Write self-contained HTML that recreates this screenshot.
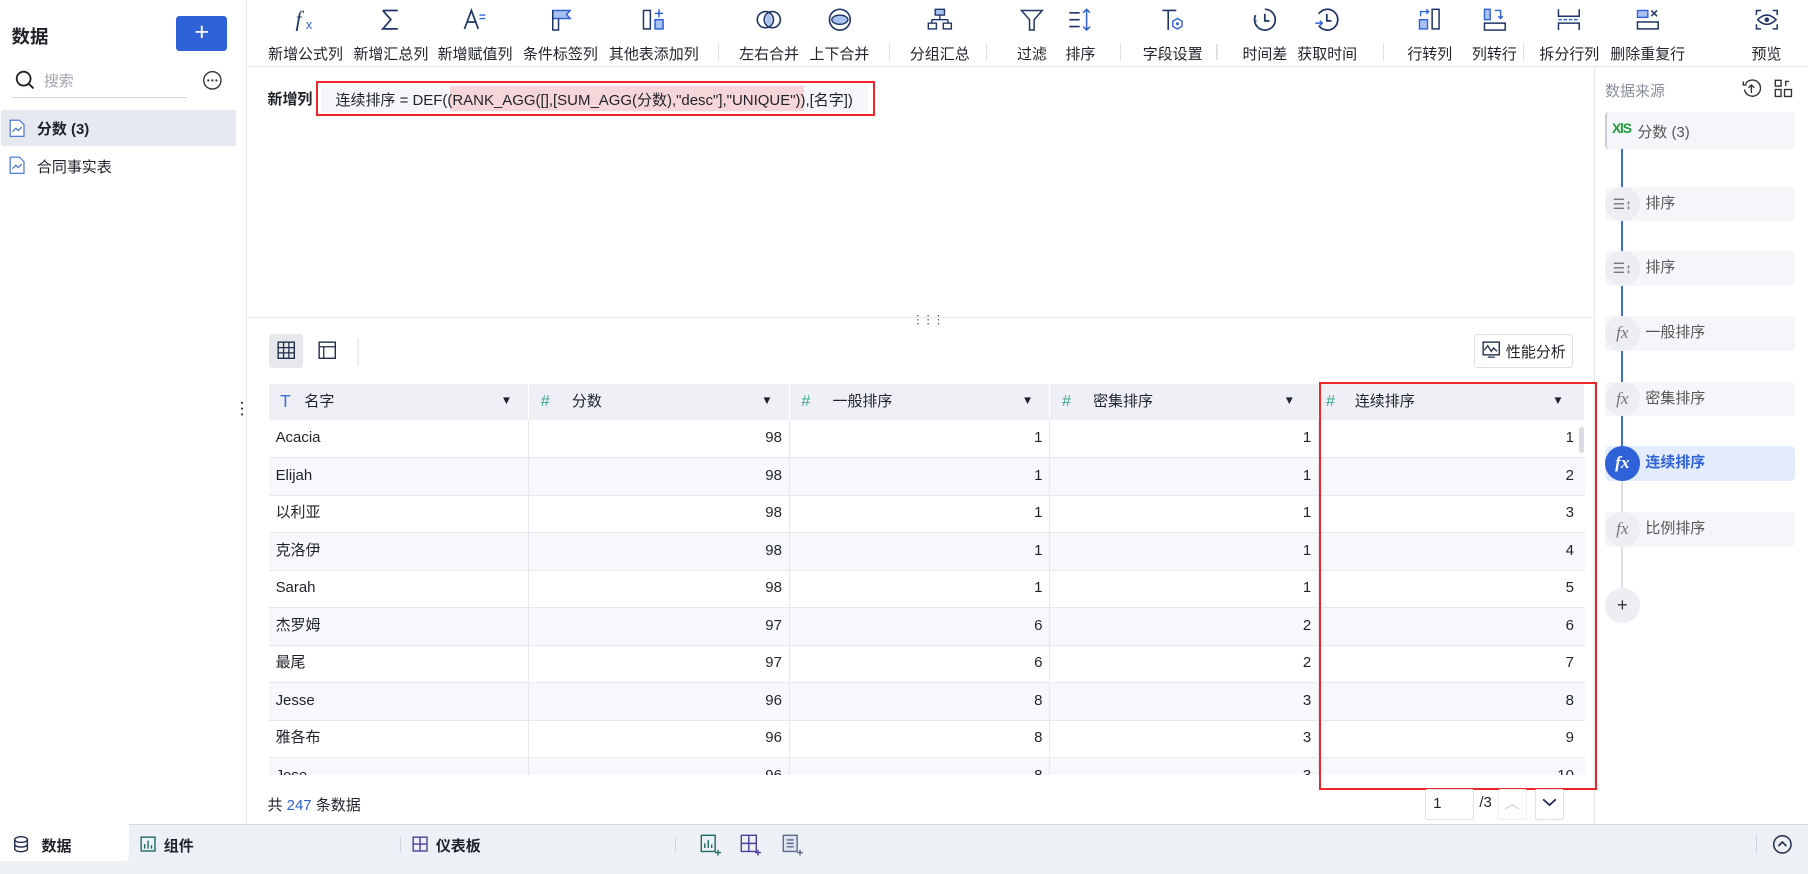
<!DOCTYPE html>
<html><head><meta charset="utf-8">
<style>
*{box-sizing:border-box;margin:0;padding:0}
html,body{width:1808px;height:874px;overflow:hidden;background:#fff}
#w{position:absolute;left:0;top:0;width:1568px;height:758px;zoom:1.15306;font-family:"Liberation Sans","Noto Sans CJK SC",sans-serif;color:#1f2329;font-size:13px;background:#fff;overflow:hidden}
.a{position:absolute}
.tb{position:absolute;top:0;width:90px;margin-left:-45px;text-align:center}
.tb svg{position:absolute;left:33px;top:6px}
.tb span{position:absolute;top:37px;left:0;width:90px;font-size:13px;white-space:nowrap;text-align:center;color:#1f2329}
.sep{position:absolute;top:38px;width:1px;height:14px;background:#dcdfe6}
.th{position:absolute;top:333px;height:31px;background:#eef0f5;border-right:1px solid #fff;font-size:13px;line-height:31px}
.row{position:absolute;left:233px;width:1142px;height:33px;border-bottom:1px solid #e6e8ee;font-size:13px;line-height:32px}
.row div{position:absolute;top:0;height:32px;border-right:1px solid #e6e8ee;padding:0 6px}
.row .r{text-align:right}
.node{position:absolute;left:1392px;width:165px;height:30px;background:#f5f6f9;border-radius:4px;font-size:13px;line-height:30px;color:#555}
.node .c{position:absolute;left:0;top:0;width:30px;height:30px;border-radius:15px;background:#eceef3;text-align:center;font-style:italic;font-family:"Liberation Serif",serif;font-size:15px;color:#777}
.node span{position:absolute;left:35px}
</style></head><body><div id="w">

<!-- left sidebar -->
<div class="a" style="left:0;top:0;width:214px;height:715px;border-right:1px solid #e6e8ee"></div>
<div class="a" style="left:10px;top:20px;font-size:16px;font-weight:bold">数据</div>
<div class="a" style="left:153px;top:14px;width:44px;height:30px;background:#2f62d8;border-radius:3px;color:#fff;font-size:22px;line-height:28px;text-align:center">+</div>
<svg class="a" style="left:13px;top:61px" width="18" height="18" viewBox="0 0 18 18"><circle cx="7.5" cy="7.5" r="6" fill="none" stroke="#1f2329" stroke-width="1.6"/><path d="M12 12l4 4" stroke="#1f2329" stroke-width="1.6"/></svg>
<div class="a" style="left:38px;top:61px;color:#a0a4ad">搜索</div>
<div class="a" style="left:10px;top:84px;width:152px;height:1px;background:#d4d7de"></div>
<svg class="a" style="left:175px;top:61px" width="18" height="18"><circle cx="9" cy="9" r="7.5" fill="none" stroke="#333" stroke-width="1.2"/><circle cx="5.5" cy="9" r="1" fill="#333"/><circle cx="9" cy="9" r="1" fill="#333"/><circle cx="12.5" cy="9" r="1" fill="#333"/></svg>
<div class="a" style="left:1px;top:95px;width:204px;height:32px;background:#e6e9f0"></div>
<svg class="a" style="left:8px;top:103px" width="14" height="16"><path d="M1 1h8l4 4v10H1z" fill="#fff" stroke="#3e6fd8"/><path d="M3 11l3-3 2 2 3-3" fill="none" stroke="#3e6fd8"/></svg>
<div class="a" style="left:32px;top:102px;font-weight:bold">分数 (3)</div>
<svg class="a" style="left:8px;top:135px" width="14" height="16"><path d="M1 1h8l4 4v10H1z" fill="#fff" stroke="#3e6fd8"/><path d="M3 11l3-3 2 2 3-3" fill="none" stroke="#3e6fd8"/></svg>
<div class="a" style="left:32px;top:135px">合同事实表</div>
<div class="a" style="left:209px;top:347px;width:2px;height:16px;background:radial-gradient(circle,#334 0.9px,transparent 1.1px) 0 0/2px 5px"></div>

<!-- toolbar -->
<div class="a" style="left:214px;top:57px;width:1354px;height:1px;background:#e8e9ee"></div>
<div class="tb" style="left:265px"><svg width="24" height="22"><text x="3" y="17" font-family="Liberation Serif" font-style="italic" font-size="19" fill="#1f3566">f</text><text x="12" y="19" font-size="11" fill="#2f62d8">x</text></svg><span>新增公式列</span></div>
<div class="tb" style="left:339px"><svg width="24" height="22"><path d="M5 3h13M5 3l7 8-7 8h13" fill="none" stroke="#1f3566" stroke-width="1.5"/></svg><span>新增汇总列</span></div>
<div class="tb" style="left:412px"><svg width="24" height="22"><path d="M3 19l6-16 6 16M5.5 13h7" fill="none" stroke="#1f3566" stroke-width="1.5"/><path d="M16 7h5M16 10h5" stroke="#2f62d8" stroke-width="1.2"/></svg><span>新增赋值列</span></div>
<div class="tb" style="left:486px"><svg width="24" height="22"><path d="M5 3h15l-3 3.5 3 3.5H5z" fill="#a9c1ef" stroke="#2f62d8" stroke-width="1.3"/><path d="M5 3v17h5v-10" fill="none" stroke="#1f3566" stroke-width="1.3"/></svg><span>条件标签列</span></div>
<div class="tb" style="left:567px"><svg width="24" height="22"><rect x="3" y="3" width="6" height="16" fill="none" stroke="#1f3566" stroke-width="1.3"/><rect x="13" y="11" width="7" height="8" fill="#a9c1ef" stroke="#2f62d8" stroke-width="1.3"/><path d="M16.5 2v7M13 5.5h7" stroke="#2f62d8" stroke-width="1.3"/></svg><span>其他表添加列</span></div>
<div class="sep" style="left:623px"></div>
<div class="tb" style="left:667px"><svg width="24" height="22"><circle cx="9" cy="11" r="7" fill="none" stroke="#1f3566" stroke-width="1.4"/><circle cx="15" cy="11" r="7" fill="none" stroke="#1f3566" stroke-width="1.4"/><path d="M12 5.5a7 7 0 0 1 0 11a7 7 0 0 1 0-11z" fill="#a9c1ef"/></svg><span>左右合并</span></div>
<div class="tb" style="left:728px"><svg width="24" height="22"><circle cx="12" cy="11" r="9" fill="none" stroke="#1f3566" stroke-width="1.4"/><ellipse cx="12" cy="11" rx="7" ry="4" fill="#a9c1ef" stroke="#1f3566" stroke-width="1.2"/></svg><span>上下合并</span></div>
<div class="sep" style="left:771px"></div>
<div class="tb" style="left:815px"><svg width="24" height="22"><rect x="8" y="2" width="8" height="5" fill="#a9c1ef" stroke="#1f3566" stroke-width="1.2"/><path d="M12 7v4M5 11h14M5 11v3M19 11v3" fill="none" stroke="#1f3566" stroke-width="1.2"/><rect x="2" y="14" width="7" height="5" fill="none" stroke="#1f3566" stroke-width="1.2"/><rect x="15" y="14" width="7" height="5" fill="none" stroke="#1f3566" stroke-width="1.2"/></svg><span>分组汇总</span></div>
<div class="sep" style="left:855px"></div>
<div class="tb" style="left:895px"><svg width="24" height="22"><path d="M3 3h18l-7 8v9h-4v-9z" fill="none" stroke="#1f3566" stroke-width="1.3"/></svg><span>过滤</span></div>
<div class="tb" style="left:937px"><svg width="24" height="22"><path d="M2 5h9M2 11h9M2 17h9" stroke="#1f3566" stroke-width="1.4"/><path d="M17 2v18M14 5l3-3 3 3M14 17l3 3 3-3" fill="none" stroke="#2f62d8" stroke-width="1.3"/></svg><span>排序</span></div>
<div class="sep" style="left:971px"></div>
<div class="tb" style="left:1017px"><svg width="24" height="22"><path d="M3 3h12M8 3v17" stroke="#1f3566" stroke-width="1.4"/><path d="M16 10l4 2.3v4.5l-4 2.3-4-2.3v-4.5z" fill="none" stroke="#2f62d8" stroke-width="1.2"/><circle cx="16" cy="14.5" r="1.3" fill="#2f62d8"/></svg><span>字段设置</span></div>
<div class="sep" style="left:1055px"></div>
<div class="tb" style="left:1097px"><svg width="24" height="22"><path d="M12 2a9 9 0 1 1-8 5" fill="none" stroke="#1f3566" stroke-width="1.5"/><path d="M12 6v6h4" fill="none" stroke="#1f3566" stroke-width="1.5"/><path d="M4 11v2M6 17v1" stroke="#2f62d8" stroke-width="1.5"/></svg><span>时间差</span></div>
<div class="tb" style="left:1151px"><svg width="24" height="22"><path d="M5 6a9 9 0 1 1 0 10" fill="none" stroke="#1f3566" stroke-width="1.5"/><path d="M12 6v6h4" fill="none" stroke="#1f3566" stroke-width="1.5"/><path d="M2 14h6M6 12l2 2-2 2" fill="none" stroke="#2f62d8" stroke-width="1.3"/></svg><span>获取时间</span></div>
<div class="sep" style="left:1199px"></div>
<div class="tb" style="left:1240px"><svg width="24" height="22"><rect x="3" y="11" width="7" height="8" fill="#a9c1ef" stroke="#2f62d8" stroke-width="1.2"/><rect x="14" y="2" width="6" height="17" fill="none" stroke="#1f3566" stroke-width="1.3"/><path d="M4 8V4h7M9 2l2 2-2 2" fill="none" stroke="#2f62d8" stroke-width="1.2"/></svg><span>行转列</span></div>
<div class="tb" style="left:1296px"><svg width="24" height="22"><rect x="3" y="2" width="5" height="9" fill="#a9c1ef" stroke="#2f62d8" stroke-width="1.2"/><rect x="3" y="14" width="18" height="6" fill="none" stroke="#1f3566" stroke-width="1.3"/><path d="M12 3h5v7M15 8l2 2 2-2" fill="none" stroke="#2f62d8" stroke-width="1.2"/></svg><span>列转行</span></div>
<div class="sep" style="left:1321px"></div>
<div class="tb" style="left:1361px"><svg width="24" height="22"><path d="M3 2v6h18V2M3 20v-6h18v6" fill="none" stroke="#1f3566" stroke-width="1.3"/><path d="M3 11h18" stroke="#2f62d8" stroke-width="1.3" stroke-dasharray="3 1.5"/></svg><span>拆分行列</span></div>
<div class="tb" style="left:1429px"><svg width="24" height="22"><rect x="3" y="3" width="9" height="6" fill="#a9c1ef" stroke="#2f62d8" stroke-width="1.2"/><path d="M15 3l5 5M20 3l-5 5" stroke="#1f3566" stroke-width="1.3"/><rect x="3" y="13" width="18" height="6" fill="none" stroke="#1f3566" stroke-width="1.3"/></svg><span>删除重复行</span></div>
<div class="tb" style="left:1532px"><svg width="24" height="22"><path d="M3 7V3h4M17 3h4v4M21 15v4h-4M7 19H3v-4" fill="none" stroke="#1f3566" stroke-width="1.3"/><path d="M4 11q8-8 16 0q-8 8-16 0z" fill="none" stroke="#1f3566" stroke-width="1.3"/><circle cx="12" cy="11" r="2" fill="#1f3566"/></svg><span>预览</span></div>

<!-- formula -->
<div class="a" style="left:232px;top:76px;font-weight:bold">新增列</div>
<div class="a" style="left:274px;top:70px;width:485px;height:31px;border:2px solid #f0262d;background:#fff"></div>
<div class="a" style="left:278px;top:74px;width:475px;height:23px;background:#f5f6fa"></div>
<div class="a" style="left:390px;top:75px;width:307px;height:21px;background:#f6d6d9"></div>
<div class="a" style="left:291px;top:77px;font-size:13px;white-space:nowrap">连续排序 = DEF((RANK_AGG([],[SUM_AGG(分数),"desc"],"UNIQUE")),[名字])</div>

<!-- divider -->
<div class="a" style="left:214px;top:275px;width:1168px;height:1px;background:#e6e8ee"></div>
<div class="a" style="left:791px;top:271px;font-size:10px;color:#555;letter-spacing:-1px">⋮⋮⋮</div>

<!-- right panel -->
<div class="a" style="left:1382px;top:58px;width:1px;height:657px;background:#e6e8ee"></div>
<div class="a" style="left:1392px;top:69px;color:#8a8f99">数据来源</div>
<svg class="a" style="left:1510px;top:68px" width="18" height="18"><path d="M4 5a7 7 0 1 1-1 5" fill="none" stroke="#333" stroke-width="1.2"/><path d="M2 3v3h3" fill="none" stroke="#333" stroke-width="1.2"/><path d="M9 13V6M6.5 8.5L9 6l2.5 2.5" fill="none" stroke="#333" stroke-width="1.2"/></svg>
<svg class="a" style="left:1538px;top:68px" width="18" height="18"><rect x="2" y="2" width="5" height="5" fill="none" stroke="#333" stroke-width="1.2"/><rect x="2" y="10" width="5" height="6" fill="none" stroke="#333" stroke-width="1.2"/><rect x="10" y="10" width="6" height="6" fill="none" stroke="#333" stroke-width="1.2"/><path d="M11 7V3h3" fill="none" stroke="#333" stroke-width="1.2"/></svg>
<div class="a" style="left:1406px;top:128px;width:1.5px;height:262px;background:#3e6fd8"></div>
<div class="a" style="left:1406px;top:390px;width:1.5px;height:130px;background:#dcdfe6"></div>
<div class="a" style="left:1392px;top:97px;width:165px;height:32px;background:#f5f6f9;border-left:2px solid #c8ccd4;border-radius:3px"></div>
<div class="a" style="left:1398px;top:104px;font-weight:bold;color:#1f9d3a;font-size:12px;letter-spacing:-1px">XlS</div>
<div class="a" style="left:1420px;top:105px;color:#555">分数 (3)</div>
<div class="node" style="top:162px"><div class="c" style="font-style:normal;font-family:'Liberation Sans';font-size:12px">☰↕</div><span>排序</span></div>
<div class="node" style="top:218px"><div class="c" style="font-style:normal;font-family:'Liberation Sans';font-size:12px">☰↕</div><span>排序</span></div>
<div class="node" style="top:274px"><div class="c">fx</div><span>一般排序</span></div>
<div class="node" style="top:331px"><div class="c">fx</div><span>密集排序</span></div>
<div class="node" style="top:387px;background:#e3ecfd;color:#2f62d8;font-weight:bold"><div class="c" style="background:#2f62d8;color:#fff">fx</div><span>连续排序</span></div>
<div class="node" style="top:444px"><div class="c">fx</div><span>比例排序</span></div>
<div class="a" style="left:1392px;top:510px;width:30px;height:30px;border-radius:15px;background:#eceef3;text-align:center;line-height:29px;font-size:16px;color:#333">+</div>

<!-- view toggles -->
<div class="a" style="left:233px;top:290px;width:30px;height:29px;background:#e6e8ec;border-radius:3px"></div>
<svg class="a" style="left:240px;top:296px" width="16" height="16"><rect x="1" y="1" width="14" height="14" fill="none" stroke="#1f2d4d" stroke-width="1.2"/><path d="M5.7 1v14M10.3 1v14M1 5.7h14M1 10.3h14" stroke="#1f2d4d" stroke-width="1.1"/></svg>
<svg class="a" style="left:276px;top:296px" width="16" height="16"><rect x="1" y="1" width="14" height="14" fill="none" stroke="#1f2d4d" stroke-width="1.2"/><path d="M1 5h14M5 5v10" stroke="#1f2d4d" stroke-width="1.1"/></svg>
<div class="a" style="left:310px;top:293px;width:1px;height:24px;background:#eceef2"></div>
<div class="a" style="left:1278px;top:290px;width:86px;height:29px;border:1px solid #dcdfe6;border-radius:3px"></div>
<svg class="a" style="left:1285px;top:296px" width="16" height="15"><rect x="1" y="1" width="14" height="11" fill="none" stroke="#1f2d4d" stroke-width="1.2"/><path d="M2 8l3-4 3 5 2-3 3 3M5 14h6" fill="none" stroke="#1f2d4d" stroke-width="1.1"/></svg>
<div class="a" style="left:1306px;top:296px">性能分析</div>

<!-- table -->
<div class="th" style="left:233px;width:226px"><span style="position:absolute;left:10px;color:#3e6fd8;font-size:15px">T</span><span style="position:absolute;left:31px">名字</span><span style="position:absolute;right:14px;font-size:10px">▼</span></div>
<div class="th" style="left:459px;width:226px"><span style="position:absolute;left:10px;color:#3aa890;font-size:14px">#</span><span style="position:absolute;left:37px">分数</span><span style="position:absolute;right:14px;font-size:10px">▼</span></div>
<div class="th" style="left:685px;width:226px"><span style="position:absolute;left:10px;color:#3aa890;font-size:14px">#</span><span style="position:absolute;left:37px">一般排序</span><span style="position:absolute;right:14px;font-size:10px">▼</span></div>
<div class="th" style="left:911px;width:233px"><span style="position:absolute;left:10px;color:#3aa890;font-size:14px">#</span><span style="position:absolute;left:37px">密集排序</span><span style="position:absolute;right:20px;font-size:10px">▼</span></div>
<div class="th" style="left:1144px;width:231px"><span style="position:absolute;left:6px;color:#3aa890;font-size:14px">#</span><span style="position:absolute;left:31px">连续排序</span><span style="position:absolute;right:18px;font-size:10px">▼</span></div>
<div class="a" style="left:233px;top:364px;width:1142px;height:308px;overflow:hidden">
<div style="position:relative;top:-364px;left:-233px">
<div class="row" style="top:364px"><div style="left:0;width:226px">Acacia</div><div class="r" style="left:226px;width:226px">98</div><div class="r" style="left:452px;width:226px">1</div><div class="r" style="left:678px;width:233px">1</div><div class="r" style="left:911px;width:231px;border:0;padding-right:10px">1</div></div>
<div class="row" style="top:397px;background:#f7f8fb"><div style="left:0;width:226px">Elijah</div><div class="r" style="left:226px;width:226px">98</div><div class="r" style="left:452px;width:226px">1</div><div class="r" style="left:678px;width:233px">1</div><div class="r" style="left:911px;width:231px;border:0;padding-right:10px">2</div></div>
<div class="row" style="top:429px"><div style="left:0;width:226px">以利亚</div><div class="r" style="left:226px;width:226px">98</div><div class="r" style="left:452px;width:226px">1</div><div class="r" style="left:678px;width:233px">1</div><div class="r" style="left:911px;width:231px;border:0;padding-right:10px">3</div></div>
<div class="row" style="top:462px;background:#f7f8fb"><div style="left:0;width:226px">克洛伊</div><div class="r" style="left:226px;width:226px">98</div><div class="r" style="left:452px;width:226px">1</div><div class="r" style="left:678px;width:233px">1</div><div class="r" style="left:911px;width:231px;border:0;padding-right:10px">4</div></div>
<div class="row" style="top:494px"><div style="left:0;width:226px">Sarah</div><div class="r" style="left:226px;width:226px">98</div><div class="r" style="left:452px;width:226px">1</div><div class="r" style="left:678px;width:233px">1</div><div class="r" style="left:911px;width:231px;border:0;padding-right:10px">5</div></div>
<div class="row" style="top:527px;background:#f7f8fb"><div style="left:0;width:226px">杰罗姆</div><div class="r" style="left:226px;width:226px">97</div><div class="r" style="left:452px;width:226px">6</div><div class="r" style="left:678px;width:233px">2</div><div class="r" style="left:911px;width:231px;border:0;padding-right:10px">6</div></div>
<div class="row" style="top:559px"><div style="left:0;width:226px">最尾</div><div class="r" style="left:226px;width:226px">97</div><div class="r" style="left:452px;width:226px">6</div><div class="r" style="left:678px;width:233px">2</div><div class="r" style="left:911px;width:231px;border:0;padding-right:10px">7</div></div>
<div class="row" style="top:592px;background:#f7f8fb"><div style="left:0;width:226px">Jesse</div><div class="r" style="left:226px;width:226px">96</div><div class="r" style="left:452px;width:226px">8</div><div class="r" style="left:678px;width:233px">3</div><div class="r" style="left:911px;width:231px;border:0;padding-right:10px">8</div></div>
<div class="row" style="top:624px"><div style="left:0;width:226px">雅各布</div><div class="r" style="left:226px;width:226px">96</div><div class="r" style="left:452px;width:226px">8</div><div class="r" style="left:678px;width:233px">3</div><div class="r" style="left:911px;width:231px;border:0;padding-right:10px">9</div></div>
<div class="row" style="top:657px;background:#f7f8fb"><div style="left:0;width:226px">Jose</div><div class="r" style="left:226px;width:226px">96</div><div class="r" style="left:452px;width:226px">8</div><div class="r" style="left:678px;width:233px">3</div><div class="r" style="left:911px;width:231px;border:0;padding-right:10px">10</div></div>
</div></div>
<div class="a" style="left:1369px;top:370px;width:5px;height:23px;background:#d8dbe1;border-radius:3px"></div>
<div class="a" style="left:1144px;top:331px;width:241px;height:354px;border:2px solid #f0262d"></div>

<!-- footer -->
<div class="a" style="left:232px;top:689px">共 <span style="color:#2f62d8">247</span> 条数据</div>
<div class="a" style="left:1236px;top:684px;width:42px;height:27px;border:1px solid #dcdfe6;border-radius:2px;padding:5px 6px">1</div>
<div class="a" style="left:1283px;top:689px">/3</div>
<div class="a" style="left:1299px;top:684px;width:25px;height:27px;border:1px solid #eceef2;border-radius:2px;text-align:center;color:#ccc;line-height:25px">︿</div>
<div class="a" style="left:1331px;top:684px;width:25px;height:27px;border:1px solid #dcdfe6;border-radius:2px"></div>
<svg class="a" style="left:1337px;top:691px" width="13" height="10"><path d="M1 2l5.5 5 5.5-5" fill="none" stroke="#1f2d4d" stroke-width="1.5"/></svg>

<!-- bottom bar -->
<div class="a" style="left:0;top:715px;width:1568px;height:43px;background:#edf0f5;border-top:1px solid #d3d8e2"></div>
<div class="a" style="left:0;top:715px;width:112px;height:32px;background:#fff;border-bottom-right-radius:4px"></div>
<svg class="a" style="left:11px;top:724px" width="14" height="16"><ellipse cx="7" cy="4" rx="5.5" ry="2.5" fill="none" stroke="#1f2d4d" stroke-width="1.2"/><path d="M1.5 4v8c0 1.5 2.5 2.5 5.5 2.5s5.5-1 5.5-2.5V4M1.5 8c0 1.5 2.5 2.5 5.5 2.5s5.5-1 5.5-2.5" fill="none" stroke="#1f2d4d" stroke-width="1.2"/></svg>
<div class="a" style="left:36px;top:724px;font-weight:bold">数据</div>
<svg class="a" style="left:121px;top:725px" width="14" height="14"><rect x="1" y="1" width="12" height="12" fill="none" stroke="#1d6b5a" stroke-width="1.2"/><path d="M4 11V7M7 11V4M10 11V8" stroke="#1d6b5a" stroke-width="1.2"/></svg>
<div class="a" style="left:142px;top:724px;font-weight:bold">组件</div>
<div class="a" style="left:347px;top:726px;width:1px;height:13px;background:#cfd3db"></div>
<svg class="a" style="left:357px;top:725px" width="14" height="14"><rect x="1" y="1" width="12" height="12" fill="none" stroke="#4b3d9c" stroke-width="1.2"/><path d="M7 1v12M1 7h12" stroke="#4b3d9c" stroke-width="1.2"/></svg>
<div class="a" style="left:378px;top:724px;font-weight:bold">仪表板</div>
<div class="a" style="left:585px;top:726px;width:1px;height:13px;background:#cfd3db"></div>
<svg class="a" style="left:606px;top:722px" width="20" height="20"><rect x="2" y="2" width="12" height="14" fill="none" stroke="#1d6b5a" stroke-width="1.2"/><path d="M5 13V9M8 13V6M11 13V10M14 17h5M16.5 14.5v5" stroke="#1d6b5a" stroke-width="1.2"/></svg>
<svg class="a" style="left:641px;top:722px" width="20" height="20"><rect x="2" y="2" width="13" height="14" fill="none" stroke="#4b3d9c" stroke-width="1.2"/><path d="M8.5 2v14M2 9h13M14 17h5M16.5 14.5v5" stroke="#4b3d9c" stroke-width="1.2"/></svg>
<svg class="a" style="left:677px;top:722px" width="20" height="20"><rect x="2" y="2" width="12" height="14" fill="#dde3f0" stroke="#5a6b8c" stroke-width="1.2"/><path d="M5 6h6M5 9h6M5 12h6M14 17h5M16.5 14.5v5" stroke="#5a6b8c" stroke-width="1.2"/></svg>
<div class="a" style="left:1523px;top:724px;width:1px;height:16px;background:#cfd3db"></div>
<svg class="a" style="left:1537px;top:723px" width="18" height="18"><circle cx="9" cy="9" r="7.5" fill="none" stroke="#1f2d4d" stroke-width="1.3"/><path d="M5.5 10.5L9 7l3.5 3.5" fill="none" stroke="#1f2d4d" stroke-width="1.4"/></svg>

</div></body></html>
